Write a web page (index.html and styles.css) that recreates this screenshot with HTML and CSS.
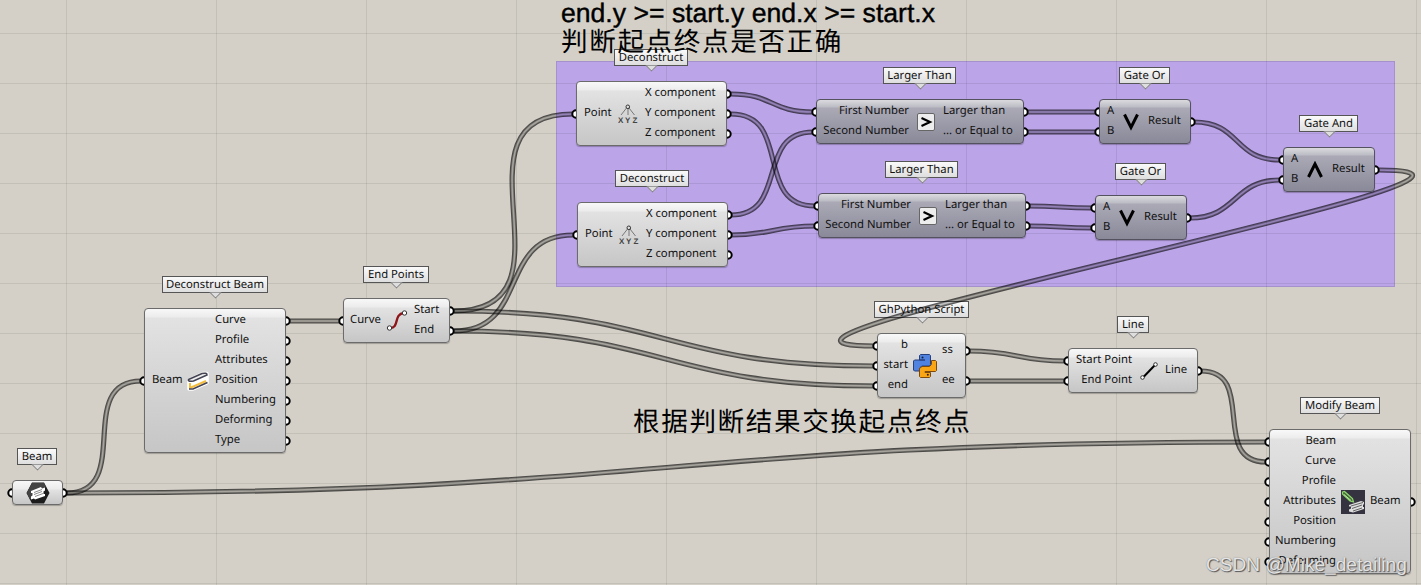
FILE: index.html
```html
<!DOCTYPE html>
<html lang="zh-CN">
<head>
<meta charset="utf-8">
<title>Beam end points</title>
<link rel="stylesheet" href="styles.css">
</head>
<body>
<main class="canvas">
  <section class="group"></section>
  <div class="grid"></div>

  <div class="tag tag-beam">Beam</div>
  <div class="tag tag-db">Deconstruct Beam</div>
  <div class="tag tag-ep">End Points</div>
  <div class="tag tag-d1">Deconstruct</div>
  <div class="tag tag-d2">Deconstruct</div>
  <div class="tag tag-lt1">Larger Than</div>
  <div class="tag tag-lt2">Larger Than</div>
  <div class="tag tag-or1">Gate Or</div>
  <div class="tag tag-or2">Gate Or</div>
  <div class="tag tag-and">Gate And</div>
  <div class="tag tag-py">GhPython Script</div>
  <div class="tag tag-line">Line</div>
  <div class="tag tag-mb">Modify Beam</div>

  <svg class="wires" id="wires" width="1421" height="585"></svg>

  <article class="node beam">
    <svg width="24" height="24" viewBox="0 0 24 24"><path d="M6 1.500h12l5.500 10.500L18 22.500H6L.5 12z" fill="#1c1c1c"/><path d="M6 2h12l2 4L4 18.500.8 12z" fill="#444"/><path d="M5 10l10-4 1 1.500 3-1v3l-1.500 1v2.500l1.500 0v2L9 18.500l-1-1-3 1v-3l1.500-1v-2.500H5z" fill="#fff"/><path d="M8 11.500l8-3M8 13.500l8-3M9 15.500l8-3" stroke="#555" stroke-width=".7"/></svg>
  </article>

  <article class="node db">
    <div class="in"><span>Beam</span></div>
    <svg width="24" height="22" viewBox="0 0 24 22"><path d="M3 10L17 3.500h4v3L21 13 7 19H3z" fill="#fff" stroke="#fff" stroke-width="3.500" stroke-linejoin="round"/><path d="M4 13v5l16-7" fill="none" stroke="#f4bd3d" stroke-width="2"/><path d="M3 19l4 0 14.500-6.500" fill="none" stroke="#454454" stroke-width="1.600"/><path d="M2.500 9.500L16 3.500q5-1 5 1.500L7.500 11q-6 1-5-1.500z" fill="#eee" stroke="#454454" stroke-width="1.600"/></svg>
    <div class="out"><span>Curve</span><span>Profile</span><span>Attributes</span><span>Position</span><span>Numbering</span><span>Deforming</span><span>Type</span></div>
  </article>

  <article class="node ep">
    <div class="in"><span>Curve</span></div>
    <svg width="22" height="22" viewBox="0 0 22 22"><path d="M4 18c10 0 3-14 14-15" fill="none" stroke="#8e1519" stroke-width="2.400"/><circle cx="3.500" cy="18" r="2.200" fill="#fff" stroke="#333"/><circle cx="18.500" cy="3" r="2.200" fill="#fff" stroke="#333"/></svg>
    <div class="out"><span>Start</span><span>End</span></div>
  </article>

  <article class="node xyz d1">
    <div class="in"><span>Point</span></div>
    <svg class="axes" width="20" height="20" viewBox="0 0 20 20"><path d="M8.500 4L3 11M11 4l5.500 7M10 4v7" stroke="#777" fill="none"/><circle cx="9.800" cy="2.800" r="1.800" fill="#ddd" stroke="#333"/><text x="0" y="19">X</text><text x="7" y="19">Y</text><text x="14.500" y="19">Z</text></svg>
    <div class="out"><span>X component</span><span>Y component</span><span>Z component</span></div>
  </article>

  <article class="node xyz d2">
    <div class="in"><span>Point</span></div>
    <svg class="axes" width="20" height="20" viewBox="0 0 20 20"><path d="M8.500 4L3 11M11 4l5.500 7M10 4v7" stroke="#777" fill="none"/><circle cx="9.800" cy="2.800" r="1.800" fill="#ddd" stroke="#333"/><text x="0" y="19">X</text><text x="7" y="19">Y</text><text x="14.500" y="19">Z</text></svg>
    <div class="out"><span>X component</span><span>Y component</span><span>Z component</span></div>
  </article>

  <article class="node dark lt lt1">
    <div class="in"><span>First Number</span><span>Second Number</span></div>
    <svg width="18" height="18" viewBox="0 0 18 18"><rect x=".5" y=".5" width="17" height="17" rx="1.500" fill="#ededed" stroke="#666"/><path d="M4.500 5L13 9l-8.500 4" fill="none" stroke="#000" stroke-width="2.200"/></svg>
    <div class="out"><span>Larger than</span><span>... or Equal to</span></div>
  </article>

  <article class="node dark lt lt2">
    <div class="in"><span>First Number</span><span>Second Number</span></div>
    <svg width="18" height="18" viewBox="0 0 18 18"><rect x=".5" y=".5" width="17" height="17" rx="1.500" fill="#ededed" stroke="#666"/><path d="M4.500 5L13 9l-8.500 4" fill="none" stroke="#000" stroke-width="2.200"/></svg>
    <div class="out"><span>Larger than</span><span>... or Equal to</span></div>
  </article>

  <article class="node dark gate or1">
    <div class="in"><span>A</span><span>B</span></div>
    <svg width="18" height="18" viewBox="0 0 18 18"><path d="M2.500 1.500L9 14.500l6.500-13" fill="none" stroke="#000" stroke-width="3"/></svg>
    <div class="out"><span>Result</span></div>
  </article>

  <article class="node dark gate or2">
    <div class="in"><span>A</span><span>B</span></div>
    <svg width="18" height="18" viewBox="0 0 18 18"><path d="M2.500 1.500L9 14.500l6.500-13" fill="none" stroke="#000" stroke-width="3"/></svg>
    <div class="out"><span>Result</span></div>
  </article>

  <article class="node dark gate and">
    <div class="in"><span>A</span><span>B</span></div>
    <svg width="18" height="18" viewBox="0 0 18 18"><path d="M2.500 16L9 3l6.500 13" fill="none" stroke="#000" stroke-width="3"/></svg>
    <div class="out"><span>Result</span></div>
  </article>

  <article class="node py">
    <div class="in"><span>b</span><span>start</span><span>end</span></div>
    <svg width="24" height="24" viewBox="0 0 24 24"><path d="M6.500 6V1.500l1-1h9l1 1v9l-1 1.500H9l-2.500 2v3h-5l-1-1v-9l1-1H12V6z" fill="#4f83df" stroke="#263f7d"/><path d="M18.500 6.500h4l1 1v9l-1 1H12v1h5.500v4l-1 1h-9l-1-1v-8L9 12.500h7.500l2-2z" fill="#f9a514" stroke="#7d4a0b"/><circle cx="9.500" cy="3.500" r="1" fill="#123"/><circle cx="14.800" cy="20.800" r="1" fill="#321"/></svg>
    <div class="out"><span>ss</span><span>ee</span></div>
  </article>

  <article class="node line">
    <div class="in"><span>Start Point</span><span>End Point</span></div>
    <svg width="18" height="18" viewBox="0 0 18 18"><path d="M3 15.500L15 3" stroke="#000" stroke-width="2"/><circle cx="2.500" cy="15.500" r="1.800" fill="#fff" stroke="#333"/><circle cx="15.500" cy="2.500" r="1.800" fill="#fff" stroke="#333"/></svg>
    <div class="out"><span>Line</span></div>
  </article>

  <article class="node mb">
    <div class="in"><span>Beam</span><span>Curve</span><span>Profile</span><span>Attributes</span><span>Position</span><span>Numbering</span><span>Deforming</span></div>
    <svg width="24" height="24" viewBox="0 0 24 24"><path d="M0 0h24v24H0z" fill="#35333f"/><path d="M1.500 2l2-.5 8 7 1 3.500-3.500-1L1.500 4z" fill="#466b3a" stroke="#8fd66f" stroke-width="1.200"/><path d="M3 4.500l7 6" stroke="#b5ec98"/><path d="M8 15l12-4 3 1v2l-1 1v2h1v2l-11 3.500-4-1v-2l2-1v-2H8z" fill="#ddd"/><path d="M10 16l12-3.500M11 18.500l10-3.500M12 21l9-3" stroke="#555" stroke-width=".9"/></svg>
    <div class="out"><span>Beam</span></div>
  </article>

  <h1 class="note note-top"><span class="latin">end.y &gt;= start.y end.x &gt;= start.x</span><span class="cjk">判断起点终点是否正确</span></h1>
  <p class="note note-mid"><span class="cjk">根据判断结果交换起点终点</span></p>
  <div class="watermark">CSDN @Mike_detailing</div>
</main>
<script src="wires.js"></script>
</body>
</html>
```

FILE: styles.css
```css
* { box-sizing: border-box; }
body { margin: 0; overflow: hidden; }

.canvas {
  position: relative;
  width: 1421px;
  height: 585px;
  overflow: hidden;
  background: #d4d0c8;
  font: 11.3px/20px "Noto Sans", "Noto Sans CJK SC", sans-serif;
  text-rendering: geometricPrecision;
  color: #111;
}

.grid {
  position: absolute;
  inset: 0;
  background-image:
    linear-gradient(90deg, rgba(0, 0, 0, .08) 1px, transparent 1px),
    linear-gradient(rgba(0, 0, 0, .08) 1px, transparent 1px);
  background-size: 150px 100%, 100% 50px;
  background-position: 66px 0, 0 33px;
}

.group {
  position: absolute;
  left: 556px;
  top: 61px;
  width: 839px;
  height: 226px;
  background: #bba4e8;
  border: 1px solid #a592cc;
}

.wires { position: absolute; left: 0; top: 0; }
.wire { fill: none; stroke: #000; stroke-opacity: .64; stroke-width: 5.2; }
.port { fill: #fff; stroke: #000; stroke-width: 2; }

/* name tags */
.tag {
  position: absolute;
  height: 17px;
  border: 1px solid #555;
  background: linear-gradient(#fafafa, #dedede);
  line-height: 15px;
  text-align: center;
  white-space: nowrap;
}
.tag::after {
  content: "";
  position: absolute;
  left: calc(50% - 4px);
  top: 11px;
  width: 8px;
  height: 8px;
  background: #dedede;
  border: solid #666;
  border-width: 0 1px 1px 0;
  transform: rotate(45deg);
  clip-path: polygon(100% 0, 100% 100%, 0 100%);
}
.tag-beam { left: 17px; top: 448px; width: 40px; }
.tag-db { left: 162px; top: 276px; width: 106px; }
.tag-ep { left: 363px; top: 266px; width: 66px; }
.tag-d1 { left: 614px; top: 49px; width: 74px; }
.tag-d2 { left: 615px; top: 170px; width: 74px; }
.tag-lt1 { left: 883px; top: 67px; width: 73px; }
.tag-lt2 { left: 885px; top: 161px; width: 73px; }
.tag-or1 { left: 1119px; top: 67px; width: 51px; }
.tag-or2 { left: 1115px; top: 163px; width: 51px; }
.tag-and { left: 1299px; top: 115px; width: 59px; }
.tag-py { left: 874px; top: 301px; width: 95px; }
.tag-line { left: 1117px; top: 316px; width: 32px; }
.tag-mb { left: 1300px; top: 397px; width: 80px; }

/* components */
.node {
  position: absolute;
  display: grid;
  align-items: center;
  border: 1px solid #6b6b6b;
  border-radius: 4px;
  background: linear-gradient(#f8f8f8 0, #ececec 8px, #e2e2e2 9px, #c6c6c6 100%);
  box-shadow: 0 1px 1px rgba(0, 0, 0, .25);
  white-space: nowrap;
}
.node.dark {
  border-color: #55525f;
  background: linear-gradient(#dadade 0, #bcbcc5 7px, #aaa9b5 8px, #8a8999 100%);
}
.in, .out { display: flex; flex-direction: column; }
.in span, .out span { height: 20px; line-height: 20px; }

.beam { left: 12px; top: 480px; width: 51px; height: 25px; justify-content: center; }
.db { left: 144px; top: 308px; width: 142px; height: 145px; padding-left: 7px; grid-template-columns: 34px 29px auto; }
.ep { left: 343px; top: 298px; width: 107px; height: 45px; padding-left: 6px; grid-template-columns: 36px 28px auto; }
.xyz { width: 151px; height: 65px; padding-left: 7px; grid-template-columns: 34px 27px auto; }
.d1 { left: 576px; top: 81px; }
.d2 { left: 577px; top: 202px; }
.lt { width: 208px; height: 45px; grid-template-columns: 92px 34px auto; }
.lt .in, .py .in, .line .in, .mb .in { text-align: right; }
.lt svg { margin-left: 8px; }
.lt1 { left: 816px; top: 99px; }
.lt2 { left: 818px; top: 193px; }
.gate { width: 92px; height: 45px; padding-left: 7px; grid-template-columns: 15px 26px auto; }
.or1 { left: 1099px; top: 99px; }
.or2 { left: 1095px; top: 195px; }
.and { left: 1283px; top: 147px; }
.py { left: 877px; top: 333px; width: 89px; height: 65px; grid-template-columns: 30px 34px auto; }
.py svg { margin-left: 5px; }
.py .out span { height: 30px; line-height: 30px; }
.line { left: 1068px; top: 348px; width: 130px; height: 45px; grid-template-columns: 63px 33px auto; }
.line svg { margin-left: 8px; }
.mb { left: 1269px; top: 429px; width: 142px; height: 145px; grid-template-columns: 66px 34px auto; }
.mb svg { margin-left: 5px; }
.axes text { font: bold 8px "Liberation Sans", sans-serif; fill: #444; }

/* Row text sits slightly above its port. */
.in, .out { padding-bottom: 1px; }

/* canvas notes */
.note { position: absolute; display: flex; flex-direction: column; margin: 0; font-weight: 400; color: #000; white-space: nowrap; }
.note-top { left: 561px; top: 0; }
.note-mid { left: 633px; top: 405px; }
.latin { height: 25px; font: 26.600px/27px "Liberation Sans", sans-serif; -webkit-text-stroke: .4px #000; }
.cjk { height: 30px; font: 26.6px/30px "Noto Sans CJK SC", sans-serif; letter-spacing: 1.600px; }

.watermark {
  position: absolute;
  left: 1206px;
  top: 554px;
  font: 19.1px/24px "Liberation Sans", sans-serif;
  color: rgba(240, 240, 240, .92);
  text-shadow: 1px 1px 1px #555, 0 0 1px #777;
  white-space: nowrap;
}
```

FILE: wires.js
```js
const svg = document.getElementById("wires");

// x1, y1, x2, y2, horizontal handle length
const wires = [
  [67, 493, 141, 381, 67],
  [67, 493, 1266, 442, 600],
  [290, 321, 340, 321, 20],
  [454, 311, 573, 114, 132],
  [454, 311, 874, 366, 212],
  [454, 331, 573, 235, 76],
  [454, 331, 874, 386, 212],
  [731, 94, 813, 112, 42],
  [731, 114, 815, 206, 62],
  [731, 215, 813, 132, 58],
  [731, 235, 815, 226, 42],
  [1027, 112, 1096, 112, 30],
  [1027, 132, 1096, 132, 30],
  [1029, 206, 1092, 208, 31],
  [1029, 226, 1092, 228, 31],
  [1194, 122, 1280, 160, 47],
  [1190, 218, 1280, 180, 47],
  [1379, 170, 874, 346, 220],
  [969, 351, 1065, 361, 48],
  [969, 381, 1065, 381, 48],
  [1201, 371, 1266, 462, 57]
];

const ports = [
  [12, 493], [63, 493], [144, 381],
  ...[0, 1, 2, 3, 4, 5, 6].map(i => [286, 321 + 20 * i]),
  [343, 321], [450, 311], [450, 331],
  [576, 114], [727, 94], [727, 114], [727, 134],
  [577, 235], [728, 215], [728, 235], [728, 255],
  [816, 112], [816, 132], [1024, 112], [1024, 132],
  [818, 206], [818, 226], [1026, 206], [1026, 226],
  [1099, 112], [1099, 132], [1191, 122],
  [1095, 208], [1095, 228], [1187, 218],
  [1283, 160], [1283, 180], [1375, 170],
  [877, 346], [877, 366], [877, 386], [966, 351], [966, 381],
  [1068, 361], [1068, 381], [1198, 371],
  ...[0, 1, 2, 3, 4, 5, 6].map(i => [1269, 442 + 20 * i]),
  [1411, 502]
];

let markup = "";
wires.forEach(([x1, y1, x2, y2, h], i) => {
  const d = `M${x1} ${y1}C${x1 + h} ${y1} ${x2 - h} ${y2} ${x2} ${y2}`;
  markup += `<mask id="m${i}" maskUnits="userSpaceOnUse" x="0" y="0" width="1421" height="585">
    <path d="${d}" fill="none" stroke="#fff" stroke-width="7"/>
    <path d="${d}" fill="none" stroke="#bbb" stroke-width="3"/>
    <path d="${d}" fill="none" stroke="#555" stroke-width="1.5"/></mask>
    <path class="wire" d="${d}" mask="url(#m${i})"/>`;
});
ports.forEach(([x, y]) => { markup += `<circle class="port" cx="${x}" cy="${y}" r="3.700"/>`; });
svg.innerHTML = markup;
```
